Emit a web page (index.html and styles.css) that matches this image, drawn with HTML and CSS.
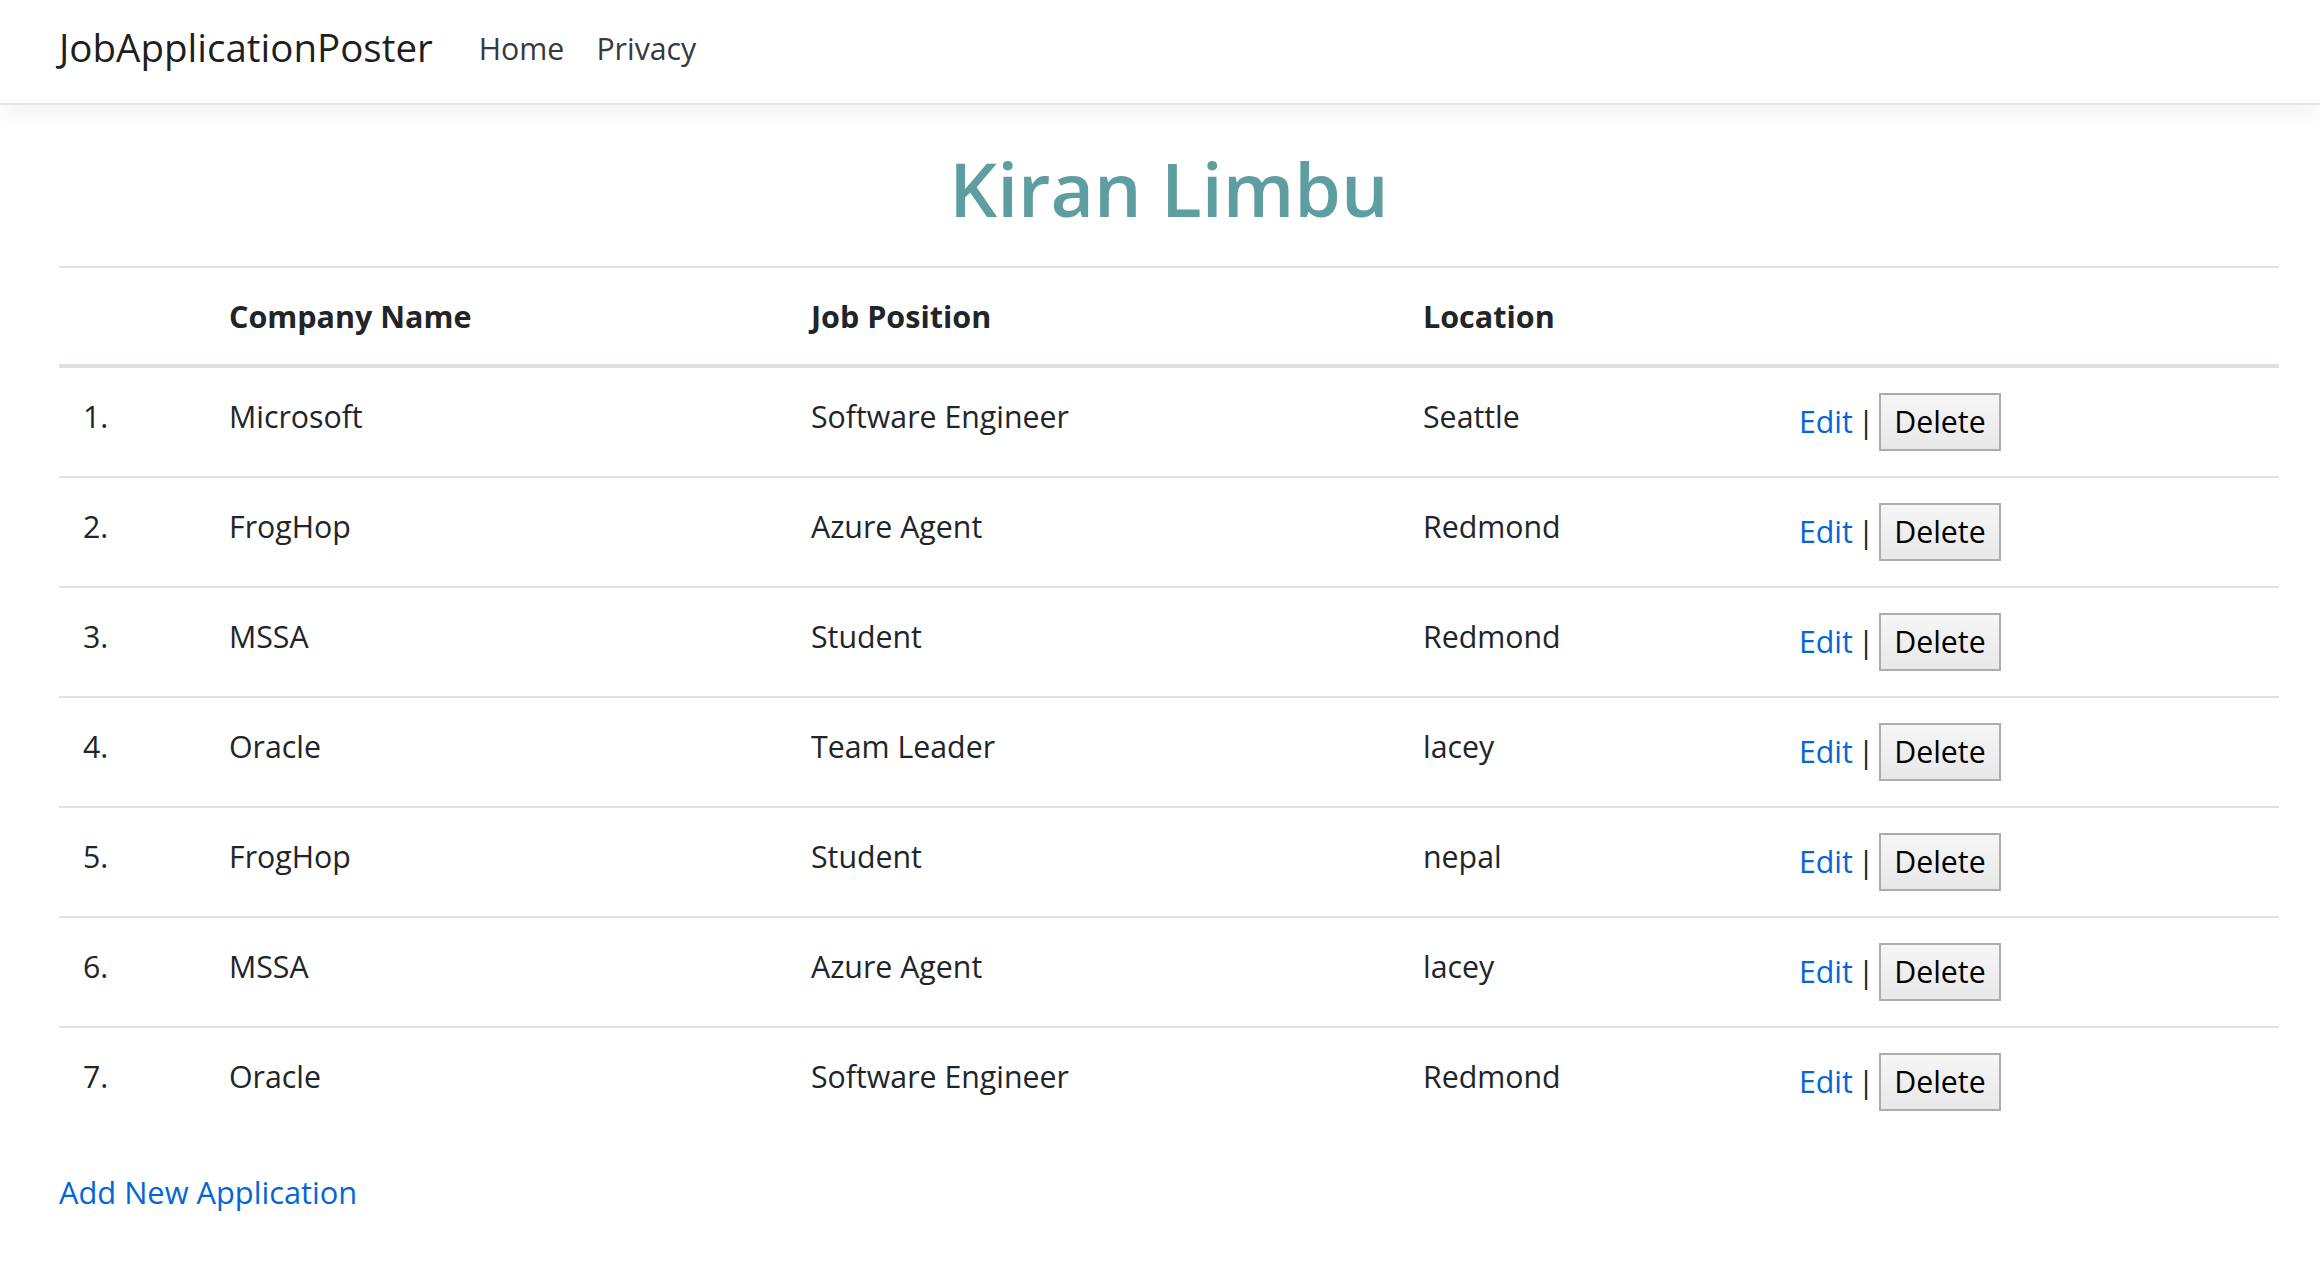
FILE: index.html
```html
<!DOCTYPE html>
<html lang="en">
<head>
<meta charset="utf-8">
<title>Index - JobApplicationPoster</title>
<link rel="stylesheet" href="styles.css">
</head>
<body>
<header class="navbar">
  <a class="brand" href="#">JobApplicationPoster</a>
  <nav class="nav">
    <a class="nav-link" href="#">Home</a>
    <a class="nav-link" href="#">Privacy</a>
  </nav>
</header>
<main class="container">
  <h1 class="title">Kiran Limbu</h1>
  <table class="table">
    <colgroup>
      <col class="c-num"><col class="c-company"><col class="c-job"><col class="c-loc"><col class="c-act">
    </colgroup>
    <thead>
      <tr><th></th><th>Company Name</th><th>Job Position</th><th>Location</th><th></th></tr>
    </thead>
    <tbody>
      <tr><td>1.</td><td>Microsoft</td><td>Software Engineer</td><td>Seattle</td><td class="actions"><a href="#">Edit</a> | <button class="btn">Delete</button></td></tr>
      <tr><td>2.</td><td>FrogHop</td><td>Azure Agent</td><td>Redmond</td><td class="actions"><a href="#">Edit</a> | <button class="btn">Delete</button></td></tr>
      <tr><td>3.</td><td>MSSA</td><td>Student</td><td>Redmond</td><td class="actions"><a href="#">Edit</a> | <button class="btn">Delete</button></td></tr>
      <tr><td>4.</td><td>Oracle</td><td>Team Leader</td><td>lacey</td><td class="actions"><a href="#">Edit</a> | <button class="btn">Delete</button></td></tr>
      <tr><td>5.</td><td>FrogHop</td><td>Student</td><td>nepal</td><td class="actions"><a href="#">Edit</a> | <button class="btn">Delete</button></td></tr>
      <tr><td>6.</td><td>MSSA</td><td>Azure Agent</td><td>lacey</td><td class="actions"><a href="#">Edit</a> | <button class="btn">Delete</button></td></tr>
      <tr><td>7.</td><td>Oracle</td><td>Software Engineer</td><td>Redmond</td><td class="actions"><a href="#">Edit</a> | <button class="btn">Delete</button></td></tr>
    </tbody>
  </table>
  <a class="add-link" href="#">Add New Application</a>
</main>
</body>
</html>
```
FILE: styles.css
```css
html, body {
  margin: 0;
  padding: 0;
  background: #fff;
}
body {
  font-family: "Open Sans", "Noto Sans", sans-serif;
  font-size: 30.3px;
  line-height: 48px;
  color: #212529;
}
a {
  color: #0366d6;
  text-decoration: none;
}
.navbar {
  display: flex;
  align-items: flex-start;
  height: 105px;
  box-sizing: border-box;
  padding: 17px 0 0 59px;
  border-bottom: 2px solid #e5e5e5;
  box-shadow: 0 8px 24px rgba(0, 0, 0, 0.05);
  position: relative;
}
.brand {
  font-size: 38.5px;
  line-height: 60px;
  color: rgba(0, 0, 0, 0.9);
  margin-right: 30px;
}
.nav {
  display: flex;
  margin-top: 8px;
}
.nav-link {
  padding: 0 16px;
  color: #343a40;
  line-height: 48px;
}
.container {
  width: 2220px;
  margin: 0 0 0 59px;
}
.title {
  margin: 35px 0 30px;
  text-align: center;
  font-size: 75px;
  line-height: 96px;
  font-weight: 600;
  color: #5f9ea0;
}
.table {
  width: 100%;
  border-collapse: collapse;
  table-layout: fixed;
  margin-bottom: 32px;
}
.c-num { width: 146px; }
.c-company { width: 582px; }
.c-job { width: 612px; }
.c-loc { width: 376px; }
.table th,
.table td {
  padding: 24px;
  text-align: left;
  vertical-align: top;
  border-top: 2px solid #dee2e6;
}
.table td {
  padding-top: 25px;
}
.table th {
  font-weight: 700;
  font-size: 30.5px;
  border-bottom: 4px solid #dee2e6;
}
.table thead + tbody tr:first-child td {
  border-top: 0;
}
.actions {
  word-spacing: -3px;
}
.btn {
  font: inherit;
  line-height: 48px;
  word-spacing: normal;
  color: #000;
  margin: 0 0 1px;
  padding: 3px 13px;
  border: 2px solid #adadad;
  border-radius: 0;
  background: linear-gradient(#f6f6f6, #e8e8e8);
}
.add-link {
  display: inline-block;
  font-size: 30.8px;
}
```
